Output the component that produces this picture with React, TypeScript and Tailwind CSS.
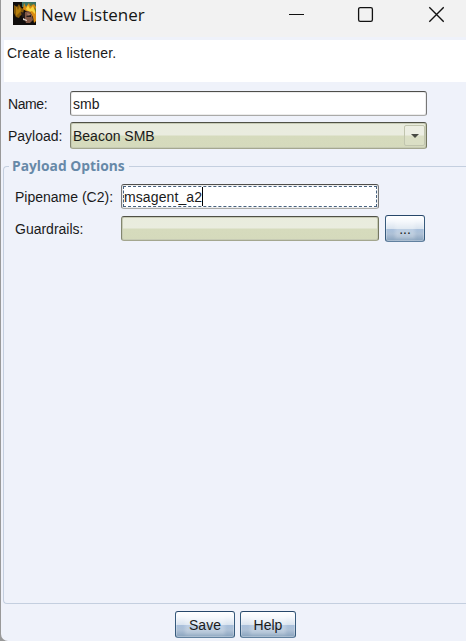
import React from 'react';

const label = 'font-["Liberation_Sans",Arial,sans-serif] text-[14px] leading-[16px] whitespace-pre text-[#1a1a1a]';
const field = 'rounded-[3px] border border-t-[#4e4e4b] border-r-[#777] border-b-[#aaaaa8] border-l-[#777] bg-white shadow-[inset_0_0_0_1px_#ececec]';
const olive =
  'rounded-[3px] border border-t-[#4f5045] border-r-[#74775f] border-b-[#a4a78f] border-l-[#83866f] bg-[linear-gradient(#e9ecdd_0%,#eaecdf_48%,#d6dbbd_52%,#d5dabc_100%)] shadow-[inset_0_0_0_1px_#c7cbb5]';

function Button({ children, className }: { children: React.ReactNode; className: string }) {
  return (
    <button
      type="button"
      className={`${label} flex h-[27px] items-center justify-center rounded-[3px] border border-t-[#27476a] border-x-[#365a7c] border-b-[#61819f] bg-[linear-gradient(#fff_0%,#f5f8fc_20%,#dae4ef_50%,#a9c0dc_52%,#aec1d6_72%,#88a2bd_100%)] shadow-[inset_0_0_0_1px_#ffffff44] ${className}`}
    >
      <span className="bg-[#ffffff38] px-[2px] shadow-[0_0_3px_2px_#ffffff38]">{children}</span>
    </button>
  );
}

function AppIcon() {
  return (
    <svg className="h-[23px] w-[23px]" viewBox="0 0 23 23">
      <path fill="#100d0c" d="M0 0h23v23H0z" />
      <path fill="#3a7265" d="M9 0h14v5H9z" />
      <path fill="#85590a" d="m1 3 3 2 2-3 2 4 3 1-1 5-3 2-1 2-3-1-2-4z" />
      <path fill="#b67e0b" d="m3 4 2 4 2-4 1 5-3 3-2 2z" />
      <path fill="#d98b12" d="m10 7 1-6 2 4 3-4 1 3 4-2 2 3v14l-2 2-1-6-3-5-4-1z" />
      <path fill="#f8d43d" d="m13 7 2-4 2 4 3-3 2 5v3l-3-3-3 1z" />
      <path fill="#61822c" d="m17 1 2 1-1 3zM21 5l2 2v4z" />
      <path fill="#805746" d="m12 10 4-1 3 4 1 5-3 3h-4l-1-3z" />
      <path fill="#a87b64" d="m14 11 3 1 1 3-3-1z" />
      <path fill="#241b19" d="m8 10 4 1v5l-3-1zM13 14l5-1v2h-4z" />
      <path fill="#ddd0ca" d="m10 16 4 2v1l-4-1z" />
    </svg>
  );
}

export default function App() {
  return (
    <div className="h-[641px] w-[466px] overflow-hidden bg-[#999]">
      <main className="ml-px flex h-full flex-col overflow-hidden rounded-bl-[7px] bg-[#eff2fa]">
        <header className="flex h-[37px] shrink-0 items-start bg-[#f2f2f2]">
          <div className="ml-[12px] mt-[2px]"><AppIcon /></div>
          <h1 className="ml-[5px] mt-[3px] w-[247px] whitespace-nowrap font-['Open_Sans',sans-serif] text-[17px] leading-[24px] text-[#151515]">New Listener</h1>
          <svg className="mt-[6px] h-[17px] w-[156px]" viewBox="0 0 156 17" fill="none" stroke="#111">
            <path d="M1 8.5h15" shapeRendering="crispEdges" />
            <rect x="70.6" y="1.6" width="13.8" height="13.8" rx="1.6" strokeWidth="1.3" />
            <path d="m141.3 1.3 14.4 14.4m0-14.4-14.4 14.4" strokeWidth="1.3" />
          </svg>
        </header>
        <p className={`${label} ml-[3px] mt-[3px] h-[42px] shrink-0 bg-white pl-[3px] pt-[5px] tracking-[0.2px]`}>Create a listener.</p>
        <section className="mt-[9px] shrink-0 pl-[7px]">
          <div className="flex h-[25px] items-center">
            <span className={`${label} w-[62px] tracking-[-0.4px]`}>Name:</span>
            <div className={`${field} ${label} h-[25px] w-[357px] pl-[2px] pt-[4px]`}>smb</div>
          </div>
          <div className="mt-[6px] flex h-[27px] items-center">
            <span className={`${label} w-[62px]`}>Payload:</span>
            <div className={`${olive} flex h-[27px] w-[357px] items-center justify-between pl-[2px] pr-px`}>
              <span className={label}>Beacon SMB</span>
              <span className="flex h-[21px] w-[21px] items-center justify-center rounded-[2px] border border-[#c1c5ae] bg-[#ffffff22]">
                <svg className="h-[4px] w-[8px]" viewBox="0 0 8 4"><path fill="#484a43" d="M0 0h8L4 4z" /></svg>
              </span>
            </div>
          </div>
        </section>
        <fieldset className="ml-[2px] mt-[9px] h-[446px] min-w-0 shrink-0 rounded-l-[4px] border border-r-0 border-[#c4cfdf] pl-[11px]">
          <legend className="-ml-[6px] h-[16px] whitespace-nowrap pl-[3px] pr-[4px] font-['Open_Sans',sans-serif] text-[13.8px] font-bold leading-[15px] text-[#6789a8]">Payload Options</legend>
          <div className="mt-[10px] flex h-[25px] items-center">
            <span className={`${label} w-[106px]`}>Pipename (C2):</span>
            <div className={`${field} h-[25px] w-[258px] p-px`}>
              <div className={`${label} flex h-full items-center border border-dashed border-[#47627f] tracking-[0.1px]`}>
                msagent_a2<i className="h-[19px] w-px bg-black" />
              </div>
            </div>
          </div>
          <div className="mt-[6px] flex h-[27px] items-center">
            <span className={`${label} w-[106px]`}>Guardrails:</span>
            <div className={`${olive} h-[25px] w-[258px]`} />
            <Button className="ml-[6px] w-[40px]">...</Button>
          </div>
        </fieldset>
        <footer className="mt-[7px] flex gap-[5px] pl-[174px]">
          <Button className="w-[60px]">Save</Button>
          <Button className="w-[56px]">Help</Button>
        </footer>
      </main>
    </div>
  );
}
